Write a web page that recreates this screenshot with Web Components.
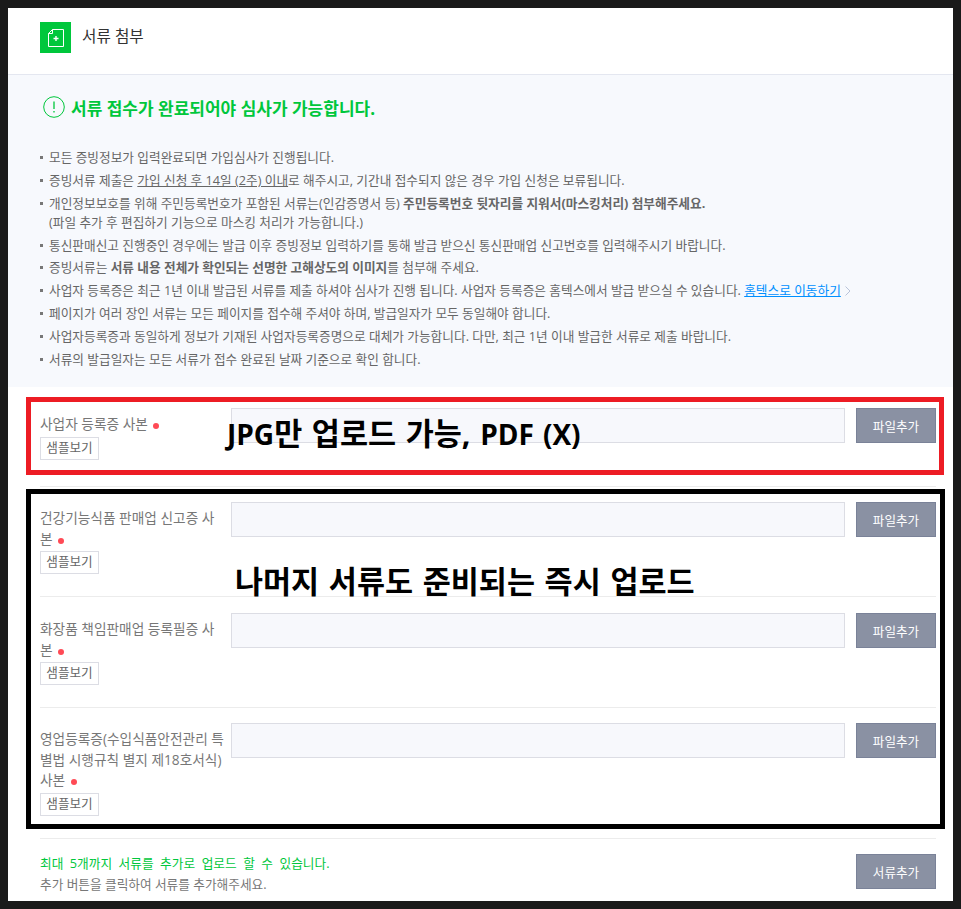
<!DOCTYPE html>
<html lang="ko">
<head>
<meta charset="utf-8">
<title>서류 첨부</title>
<style>
  html { background: #1a1a1a; }
  body {
    margin: 8px 8px 0;
    position: relative;
    height: 893px;
    overflow: hidden;
    background: #fff;
    font-family: "Open Sans", "Noto Sans CJK KR", sans-serif;
    color: #666;
  }
  html, body { scrollbar-width: none; }
  note-text span { font-size: 28px; }
</style>
</head>
<body>
<doc-header>서류 첨부</doc-header>
<notice-panel heading="서류 접수가 완료되어야 심사가 가능합니다.">
  <notice-item>모든 증빙정보가 입력완료되면 가입심사가 진행됩니다.</notice-item>
  <notice-item>증빙서류 제출은 <u>가입 신청 후 14일 (2주) 이내</u>로 해주시고, 기간내 접수되지 않은 경우 가입 신청은 보류됩니다.</notice-item>
  <notice-item>개인정보보호를 위해 주민등록번호가 포함된 서류는(인감증명서 등) <b>주민등록번호 뒷자리를 지워서(마스킹처리) 첨부해주세요.</b><br>(파일 추가 후 편집하기 기능으로 마스킹 처리가 가능합니다.)</notice-item>
  <notice-item>통신판매신고 진행중인 경우에는 발급 이후 증빙정보 입력하기를 통해 발급 받으신 통신판매업 신고번호를 입력해주시기 바랍니다.</notice-item>
  <notice-item>증빙서류는 <b>서류 내용 전체가 확인되는 선명한 고해상도의 이미지</b>를 첨부해 주세요.</notice-item>
  <notice-item>사업자 등록증은 최근 1년 이내 발급된 서류를 제출 하셔야 심사가 진행 됩니다. 사업자 등록증은 홈텍스에서 발급 받으실 수 있습니다. <hometax-link>홈텍스로 이동하기</hometax-link></notice-item>
  <notice-item>페이지가 여러 장인 서류는 모든 페이지를 접수해 주셔야 하며, 발급일자가 모두 동일해야 합니다.</notice-item>
  <notice-item>사업자등록증과 동일하게 정보가 기재된 사업자등록증명으로 대체가 가능합니다. 다만, 최근 1년 이내 발급한 서류로 제출 바랍니다.</notice-item>
  <notice-item>서류의 발급일자는 모든 서류가 접수 완료된 날짜 기준으로 확인 합니다.</notice-item>
</notice-panel>
<section-list>
  <upload-row style="--row-top:21px;--row-bottom:26.500px">사업자 등록증 사본</upload-row>
  <upload-row>건강기능식품 판매업 신고증 사본</upload-row>
  <upload-row style="--row-top:16px">화장품 책임판매업 등록필증 사본</upload-row>
  <upload-row style="--row-bottom:22.500px">영업등록증(수입식품안전관리 특별법 시행규칙 별지 제18호서식) 사본</upload-row>
  <add-footer></add-footer>
</section-list>
<note-box style="left:18px;top:389px;width:918px;height:78px;--c:#ed1c24"></note-box>
<note-box style="left:18px;top:481px;width:919px;height:340px;--c:#000"></note-box>
<note-text style="left:219px;top:405px"><span>JPG</span>만 업로드 가능, <span>PDF (X)</span></note-text>
<note-text style="left:227px;top:553px">나머지 서류도 준비되는 즉시 업로드</note-text>

<script>
class DocHeader extends HTMLElement {
  connectedCallback() {
    this.attachShadow({ mode: 'open' }).innerHTML = `
      <style>
        :host { display: flex; align-items: flex-start; gap: 11px; height: 52px; padding: 14px 0 0 32px; border-bottom: 1px solid #e4e7f0; }
        .icon { width: 31px; height: 31px; background: #00c73c; display: flex; align-items: center; justify-content: center; }
        .title { font-size: 15.700px; line-height: 28px; color: #333; }
      </style>
      <span class="icon">
        <svg width="16" height="18" viewBox="0 0 16 18" fill="none" stroke="#fff" stroke-width="1">
          <path d="M4.500 .5H15.500V17.500H.5V4.500Z"/><path d="M4.500 .5V4.500H.5"/>
          <path d="M8 7V12M5.500 9.500H10.500" stroke-width="1.400"/>
        </svg>
      </span>
      <span class="title"><slot></slot></span>`;
  }
}
customElements.define('doc-header', DocHeader);

class NoticePanel extends HTMLElement {
  connectedCallback() {
    this.attachShadow({ mode: 'open' }).innerHTML = `
      <style>
        :host { display: block; height: 312px; box-sizing: border-box; padding: 20px 32px 0; background: #f7f9fd; }
        .head { display: flex; align-items: center; gap: 6px; height: 24px; padding-left: 3px; margin-bottom: 29px; font-size: 17px; font-weight: 700; color: #00c73c; }
        ul { margin: 0; padding: 0; list-style: none; }
      </style>
      <div class="head">
        <svg width="22" height="22" viewBox="0 0 22 22" fill="none" stroke="#00c73c">
          <circle cx="11" cy="11" r="10.300"/>
          <path d="M11 5.500V13M11 15V16.500" stroke-width="1.300"/>
        </svg>
        <span>${this.getAttribute('heading')}</span>
      </div>
      <ul><slot></slot></ul>`;
  }
}
customElements.define('notice-panel', NoticePanel);

class NoticeItem extends HTMLElement {
  connectedCallback() {
    this.attachShadow({ mode: 'open' }).innerHTML = `
      <style>
        :host { display: block; position: relative; padding-left: 9px; margin-bottom: 3.850px; font-size: 12.700px; line-height: 19px; color: #666; }
        :host::before { content: ""; position: absolute; left: 0; top: 8px; width: 3px; height: 3px; background: #777; }
      </style>
      <slot></slot>`;
  }
}
customElements.define('notice-item', NoticeItem);

class HometaxLink extends HTMLElement {
  connectedCallback() {
    this.attachShadow({ mode: 'open' }).innerHTML = `
      <style>
        :host { display: inline-flex; align-items: center; gap: 4px; color: #0090ff; }
        a { color: inherit; text-decoration: underline; }
      </style>
      <a><slot></slot></a>
      <svg width="6" height="10" viewBox="0 0 6 10" fill="none" stroke="#b9c3d9"><path d="M.5 .5L5 5L.5 9.500"/></svg>`;
  }
}
customElements.define('hometax-link', HometaxLink);

class SectionList extends HTMLElement {
  connectedCallback() {
    this.attachShadow({ mode: 'open' }).innerHTML = `
      <style>:host { display: block; padding: 0 17px 0 32px; }</style>
      <slot></slot>`;
  }
}
customElements.define('section-list', SectionList);

class FileButton extends HTMLElement {
  connectedCallback() {
    this.attachShadow({ mode: 'open' }).innerHTML = `
      <style>
        :host { display: flex; align-items: center; justify-content: center; box-sizing: border-box; width: 80px; height: 35px; background: #8a91a3; border: 1px solid #7a8298; color: #fff; font-size: 12.600px; flex: none; }
      </style>
      <slot></slot>`;
  }
}
customElements.define('file-button', FileButton);

class UploadRow extends HTMLElement {
  connectedCallback() {
    this.attachShadow({ mode: 'open' }).innerHTML = `
      <style>
        :host { display: flex; align-items: flex-start; padding: var(--row-top, 15px) 0 var(--row-bottom, 22px); border-bottom: 1px solid #ececec; }
        .label { width: 185px; margin-right: 6px; flex: none; padding-top: 6px; font-size: 13.700px; line-height: 20.500px; color: #777; word-break: break-all; }
        .dot { display: inline-block; width: 6px; height: 6px; margin-left: 2px; border-radius: 50%; background: #ff4a55; vertical-align: 0; }
        .sample { display: block; width: 59px; height: 23px; box-sizing: border-box; margin-top: 2px; border: 1px solid #dcdde4; background: #fff; color: #666; font-size: 12.600px; line-height: 20px; text-align: center; }
        .field { flex: 1; height: 35px; box-sizing: border-box; border: 1px solid #dcdde4; background: #f7f8fc; }
        file-button { margin-left: 11px; }
      </style>
      <div class="label"><slot></slot> <i class="dot"></i><span class="sample">샘플보기</span></div>
      <div class="field"></div>
      <file-button>파일추가</file-button>`;
  }
}
customElements.define('upload-row', UploadRow);

class AddFooter extends HTMLElement {
  connectedCallback() {
    this.attachShadow({ mode: 'open' }).innerHTML = `
      <style>
        :host { display: flex; justify-content: space-between; align-items: flex-start; padding-top: 15px; }
        p { margin: -1px 0 0; font-size: 12.700px; line-height: 21px; color: #777; }
        .go { color: #00c73c; word-spacing: 3.200px; }
      </style>
      <p><span class="go">최대 5개까지 서류를 추가로 업로드 할 수 있습니다.</span><br>추가 버튼을 클릭하여 서류를 추가해주세요.</p>
      <file-button>서류추가</file-button>`;
  }
}
customElements.define('add-footer', AddFooter);

class NoteBox extends HTMLElement {
  connectedCallback() {
    this.attachShadow({ mode: 'open' }).innerHTML = `
      <style>:host { display: block; position: absolute; box-sizing: border-box; border: 5px solid var(--c); pointer-events: none; }</style>`;
  }
}
customElements.define('note-box', NoteBox);

class NoteText extends HTMLElement {
  connectedCallback() {
    this.attachShadow({ mode: 'open' }).innerHTML = `
      <style>:host { display: block; position: absolute; font-size: 30.500px; word-spacing: 1.750px; line-height: 40px; font-weight: 700; color: #000; white-space: nowrap; }</style>
      <slot></slot>`;
  }
}
customElements.define('note-text', NoteText);
</script>
</body>
</html>
